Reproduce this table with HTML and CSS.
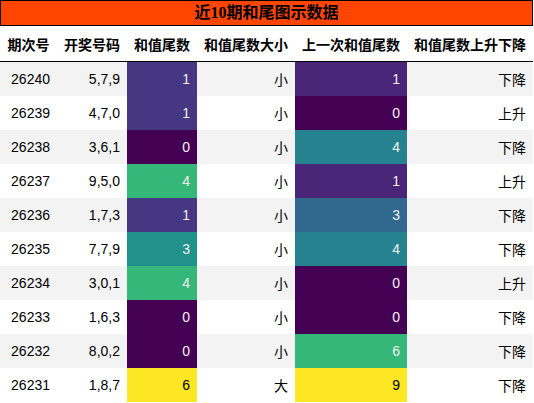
FILE: index.html
```html
<!DOCTYPE html>
<html lang="zh">
<head>
  <meta charset="UTF-8" />
  <title>近10期和尾图示数据</title>
  <link rel="stylesheet" href="styles.css">
</head>
<body>

  <div class="caption">近10期和尾图示数据</div>

  <table class="data">
    <colgroup>
      <col class="c1"><col class="c2"><col class="c3"><col class="c4"><col class="c5"><col class="c6">
    </colgroup>
    <thead>
      <tr>
        <th>期次号</th>
        <th>开奖号码</th>
        <th>和值尾数</th>
        <th>和值尾数大小</th>
        <th>上一次和值尾数</th>
        <th>和值尾数上升下降</th>
      </tr>
    </thead>
    <tbody>
      <tr><td>26240</td><td>5,7,9</td><td class="v3-1">1</td><td>小</td><td class="v9-1">1</td><td>下降</td></tr>
      <tr><td>26239</td><td>4,7,0</td><td class="v3-1">1</td><td>小</td><td class="v-0">0</td><td>上升</td></tr>
      <tr><td>26238</td><td>3,6,1</td><td class="v-0">0</td><td>小</td><td class="v9-4">4</td><td>下降</td></tr>
      <tr><td>26237</td><td>9,5,0</td><td class="v-hi">4</td><td>小</td><td class="v9-1">1</td><td>上升</td></tr>
      <tr><td>26236</td><td>1,7,3</td><td class="v3-1">1</td><td>小</td><td class="v9-3">3</td><td>下降</td></tr>
      <tr><td>26235</td><td>7,7,9</td><td class="v3-3">3</td><td>小</td><td class="v9-4">4</td><td>下降</td></tr>
      <tr><td>26234</td><td>3,0,1</td><td class="v-hi">4</td><td>小</td><td class="v-0">0</td><td>上升</td></tr>
      <tr><td>26233</td><td>1,6,3</td><td class="v-0">0</td><td>小</td><td class="v-0">0</td><td>下降</td></tr>
      <tr><td>26232</td><td>8,0,2</td><td class="v-0">0</td><td>小</td><td class="v-hi">6</td><td>下降</td></tr>
      <tr><td>26231</td><td>1,8,7</td><td class="v-max">6</td><td>大</td><td class="v-max">9</td><td>下降</td></tr>
    </tbody>
  </table>

</body>
</html>
```

FILE: styles.css
```css
body {
  margin: 0;
  background: #ffffff;
  color: #000000;
  font-family: "Liberation Sans", "Noto Sans CJK SC", sans-serif;
}

.caption {
  width: 531px;
  height: 24px;
  line-height: 24px;
  border: 1px solid #000;
  background: #ff4500;
  text-align: center;
  font-family: "Liberation Serif", "Noto Sans CJK SC", serif;
  font-size: 16px;
  font-weight: bold;
}

.data {
  width: 533px;
  border-collapse: collapse;
  table-layout: fixed;
  font-size: 14px;
}

.c1 { width: 57px; }
.c2 { width: 70px; }
.c3 { width: 70px; }
.c4 { width: 98px; }
.c5 { width: 112px; }
.c6 { width: 126px; }

.data th {
  height: 35px;
  padding: 0;
  text-align: center;
  font-weight: bold;
  border-bottom: 1px solid #000;
}

.data td {
  height: 34px;
  padding: 0 7px 0 0;
  text-align: right;
}

.data tbody tr:nth-child(odd) {
  background: #f3f3f3;
}

/* viridis gradient cells */
.v-0   { background: #440154; color: #f1f1f1; }
.v9-1  { background: #482576; color: #f1f1f1; }
.v3-1  { background: #453781; color: #f1f1f1; }
.v9-3  { background: #31688e; color: #f1f1f1; }
.v9-4  { background: #26828e; color: #f1f1f1; }
.v3-3  { background: #21918c; color: #f1f1f1; }
.v-hi  { background: #35b779; color: #f1f1f1; }
.v-max { background: #fde725; color: #000000; }
```
